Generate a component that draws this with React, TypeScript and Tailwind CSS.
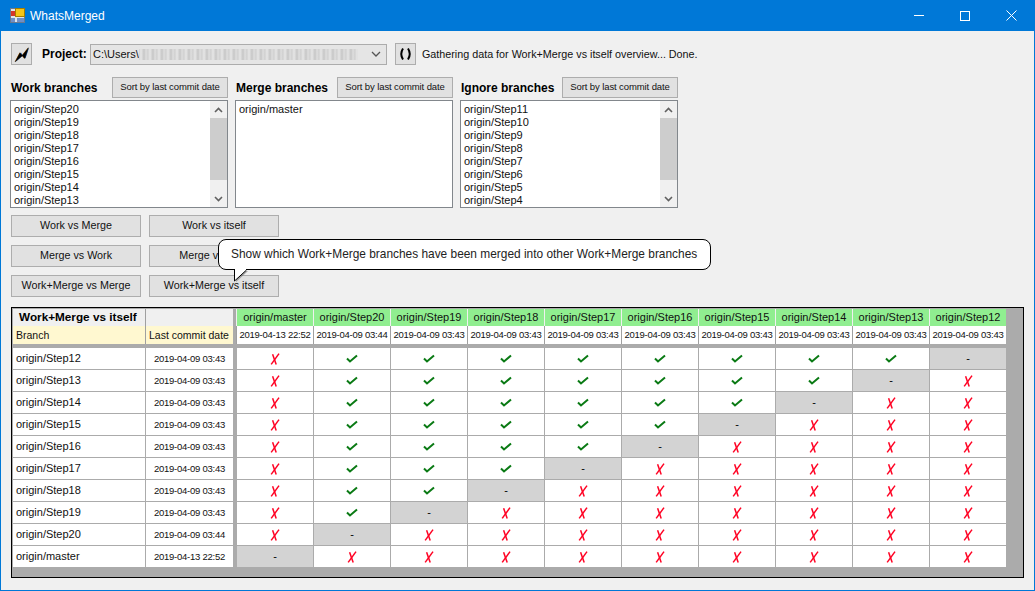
import React from "react";

const workItems = ["origin/Step20", "origin/Step19", "origin/Step18", "origin/Step17", "origin/Step16", "origin/Step15", "origin/Step14", "origin/Step13"];
const ignoreItems = ["origin/Step11", "origin/Step10", "origin/Step9", "origin/Step8", "origin/Step7", "origin/Step6", "origin/Step5", "origin/Step4"];

const columns = [
  { name: "origin/master", date: "2019-04-13 22:52" },
  { name: "origin/Step20", date: "2019-04-09 03:44" },
  { name: "origin/Step19", date: "2019-04-09 03:43" },
  { name: "origin/Step18", date: "2019-04-09 03:43" },
  { name: "origin/Step17", date: "2019-04-09 03:43" },
  { name: "origin/Step16", date: "2019-04-09 03:43" },
  { name: "origin/Step15", date: "2019-04-09 03:43" },
  { name: "origin/Step14", date: "2019-04-09 03:43" },
  { name: "origin/Step13", date: "2019-04-09 03:43" },
  { name: "origin/Step12", date: "2019-04-09 03:43" },
];

// rows run the other way round, the dash walks back along the diagonal
const rows = [...columns].reverse();

function WinButton({ children, className }: { children: React.ReactNode; className: string }) {
  return (
    <button className={`bg-[#e1e1e1] border border-[#adadad] text-[10.75px] text-[#111] flex items-center justify-center whitespace-nowrap ${className}`}>
      {children}
    </button>
  );
}

function ScrollBar() {
  return (
    <div className="w-[17px] h-full bg-[#f0f0f0] flex flex-col items-center shrink-0">
      <div className="h-[17px] flex items-center justify-center">
        <svg width="9" height="6" viewBox="0 0 9 6"><path d="M1 5 L4.5 1.5 L8 5" fill="none" stroke="#606060" strokeWidth="1.6" /></svg>
      </div>
      <div className="w-full h-[62px] bg-[#cdcdcd]" />
      <div className="flex-1" />
      <div className="h-[17px] flex items-center justify-center">
        <svg width="9" height="6" viewBox="0 0 9 6"><path d="M1 1 L4.5 4.5 L8 1" fill="none" stroke="#606060" strokeWidth="1.6" /></svg>
      </div>
    </div>
  );
}

function ListBox({ items, scroll }: { items: string[]; scroll?: boolean }) {
  return (
    <div className="w-[218px] h-[108px] border border-[#82878c] bg-white flex overflow-hidden">
      <div className="flex-1 pl-[3px] pt-[2px] text-[11px] leading-[13px] text-[#111] overflow-hidden">
        {items.map((s) => (
          <div key={s} className="h-[13px]">{s}</div>
        ))}
      </div>
      {scroll && <ScrollBar />}
    </div>
  );
}

function BranchHeader({ title }: { title: string }) {
  return (
    <div className="w-[218px] h-[21px] flex items-center justify-between">
      <span className="text-[12px] font-bold text-black pl-px">{title}</span>
      <WinButton className="w-[116px] h-[21px] !text-[9.5px] tracking-[-0.1px]">Sort by last commit date</WinButton>
    </div>
  );
}

function Cell({ row, col }: { row: number; col: number }) {
  const dash = columns.length - 1 - row;
  if (col === dash) {
    return <div className="bg-[#d3d3d3] h-full flex items-center justify-center text-[11px] text-black">-</div>;
  }
  const ok = col >= 1 && col < dash;
  return (
    <div className="bg-white h-full flex items-center justify-center">
      {ok ? (
        <svg width="12" height="9" viewBox="0 0 12 9">
          <path d="M1 4.5 L4 7.5 L11 1.5" fill="none" stroke="#0a7a14" strokeWidth="2" />
        </svg>
      ) : (
        <svg width="10" height="12" viewBox="0 0 10 12">
          <path d="M2.6 1.2 L6.2 11.5" fill="none" stroke="#ff0022" strokeWidth="1.5" />
          <path d="M9 0.6 L1.2 11.4" fill="none" stroke="#ff0022" strokeWidth="1.5" />
        </svg>
      )}
    </div>
  );
}

function MergeGrid() {
  return (
    <div className="ml-[11px] w-[1013px] h-[271px] border border-black p-px bg-[#ababab] overflow-hidden">
      <div className="flex h-[35px] w-[993px]">
        <div className="w-[220px] shrink-0 flex flex-col bg-[#f0f0f0]">
          <div className="flex h-[17px]">
            <div className="w-[133px] text-[11.75px] font-bold text-black pl-[6px] leading-[16px] border-r border-[#a0a0a0] whitespace-nowrap">Work+Merge vs itself</div>
            <div className="flex-1" />
          </div>
          <div className="flex h-[18px] bg-[#fff8d0] text-[10.5px] text-[#111]">
            <div className="w-[133px] pl-[3px] leading-[18px] border-r border-[#a0a0a0]">Branch</div>
            <div className="flex-1 pl-[3px] leading-[18px] whitespace-nowrap">Last commit date</div>
          </div>
        </div>
        <div className="w-[3px] shrink-0" />
        <div className="grid grid-cols-[repeat(10,77px)] grid-rows-[17px_18px]">
          {columns.map((c) => (
            <div key={c.name} className="bg-[#90ee90] border-l border-[#f0f0f0] text-[11px] text-[#111] text-center leading-[16px] whitespace-nowrap">{c.name}</div>
          ))}
          {columns.map((c) => (
            <div key={c.name + "d"} className="bg-white border-l border-[#a0a0a0] text-[9.5px] tracking-[-0.25px] text-[#111] text-center leading-[18px] whitespace-nowrap">{c.date}</div>
          ))}
        </div>
      </div>
      <div className="h-[4px]" />
      <div className="w-[993px] flex flex-col gap-px">
        {rows.map((r, i) => (
          <div key={r.name} className="flex h-[21px]">
            <div className="w-[132px] bg-white text-[11px] text-[#111] pl-[3px] leading-[21px] mr-px shrink-0">{r.name}</div>
            <div className="w-[87px] bg-white text-[9.5px] tracking-[-0.25px] text-[#111] text-center leading-[21px] shrink-0">{r.date}</div>
            <div className="w-[4px] shrink-0" />
            <div className="grid grid-cols-[repeat(10,76px)] gap-x-px">
              {columns.map((c, j) => (
                <Cell key={c.name} row={i} col={j} />
              ))}
            </div>
          </div>
        ))}
      </div>
    </div>
  );
}

export default function App() {
  return (
    <div className="relative w-[1035px] h-[591px] bg-[#f0f0f0] border border-[#0078d7] border-t-0 font-['Liberation_Sans',sans-serif] overflow-hidden">
      <div className="h-[31px] bg-[#0078d7] flex items-center text-white -mx-px">
        <svg width="15" height="15" viewBox="0 0 15 15" className="ml-[10px]">
          <rect x="0.5" y="0.5" width="14" height="14" fill="#dfe6ee" stroke="#6a7a90" />
          <rect x="5.5" y="0.5" width="9" height="8" fill="#f5c518" stroke="#a67c00" />
          <rect x="1" y="3" width="4" height="5" fill="#d8352a" />
          <rect x="1" y="10" width="4" height="4" fill="#6f8fc8" />
          <rect x="7" y="10" width="7" height="4" fill="#6f8fc8" />
        </svg>
        <span className="ml-[5px] text-[12px]">WhatsMerged</span>
        <div className="ml-auto flex h-full items-center">
          <div className="w-[46px] flex justify-center"><div className="w-[10px] h-px bg-white" /></div>
          <div className="w-[46px] flex justify-center"><div className="w-[10px] h-[10px] border border-white" /></div>
          <div className="w-[46px] flex justify-center mr-px">
            <svg width="11" height="11" viewBox="0 0 11 11"><path d="M0.5 0.5 L10.5 10.5 M10.5 0.5 L0.5 10.5" stroke="#fff" strokeWidth="1" /></svg>
          </div>
        </div>
      </div>

      <div className="flex items-center h-[22px] mt-[12px] pl-[10px]">
        <WinButton className="w-[21px] h-[22px]">
          <svg width="17" height="17" viewBox="0 0 17 17">
            <path d="M1.5 16 L6.5 6.5 L8.5 9.5 L15 1.5 L11 12.5 L8.5 9.5 Z" fill="#e08a20" />
            <path d="M3 15.5 L8 6.5 L10 9.5 L16 2 L12.5 12.5 L10 9.5 Z" fill="#2a6fc0" />
            <path d="M2.2 15.8 L7 6.8 L9.2 9.6 L15.4 1.8 L11.8 12.4 L9.2 9.8 Z" fill="#000" stroke="#000" strokeWidth="0.5" />
          </svg>
        </WinButton>
        <span className="ml-[10px] text-[12px] font-bold text-black w-[48px]">Project:</span>
        <div className="w-[297px] h-[21px] border border-[#acacac] bg-[#e5e5e5] flex items-center text-[11px] text-[#111] pl-[2px]">
          <span>C:\Users\</span>
          <div className="flex-1 h-[11px] mr-[13px] bg-[repeating-linear-gradient(90deg,#d2d2d2_0px,#e6e6e6_2px,#c6c6c6_5px,#dedede_7px,#cfcfcf_9px)]" />
          <svg width="10" height="6" viewBox="0 0 10 6" className="mr-[5px]"><path d="M1 1 L5 5 L9 1" fill="none" stroke="#555" strokeWidth="1.3" /></svg>
        </div>
        <WinButton className="w-[21px] h-[22px] ml-[8px]">
          <svg width="15" height="14" viewBox="0 0 15 14">
            <path d="M5 1.5 Q1.5 7 5 12.5" fill="none" stroke="#000" strokeWidth="2" />
            <path d="M10 1.5 Q13.5 7 10 12.5" fill="none" stroke="#000" strokeWidth="2" />
          </svg>
        </WinButton>
        <span className="ml-[6px] text-[10.75px] text-[#111]">Gathering data for Work+Merge vs itself overview... Done.</span>
      </div>

      <div className="flex gap-[7px] mt-[12px] pl-[9px]">
        <BranchHeader title="Work branches" />
        <BranchHeader title="Merge branches" />
        <BranchHeader title="Ignore branches" />
      </div>

      <div className="flex gap-[7px] mt-[2px] pl-[9px]">
        <ListBox items={workItems} scroll />
        <ListBox items={["origin/master"]} />
        <ListBox items={ignoreItems} scroll />
      </div>

      <div className="grid grid-cols-[130px_130px] grid-rows-[22px_22px_22px] gap-x-[8px] gap-y-[8px] w-fit mt-[7px] ml-[10px]">
        <WinButton className="pb-px">Work vs Merge</WinButton>
        <WinButton className="pb-px">Work vs itself</WinButton>
        <WinButton className="pb-px">Merge vs Work</WinButton>
        <WinButton className="pb-px">Merge vs itself</WinButton>
        <WinButton className="pb-px">Work+Merge vs Merge</WinButton>
        <WinButton className="pb-px">Work+Merge vs itself</WinButton>
      </div>

      <div className="mt-[10px] -ml-px">
        <MergeGrid />
      </div>

      {/* balloon tooltip over the buttons */}
      <div className="absolute left-[217px] top-[239px] w-[493px] h-[31px] bg-white border border-black rounded-[8px] text-[11.9px] text-[#222] leading-[29px] pl-[12px] whitespace-nowrap">
        Show which Work+Merge branches have been merged into other Work+Merge branches
      </div>
      <svg className="absolute left-[225px] top-[268px]" width="24" height="16" viewBox="0 0 24 16">
        <path d="M11 3 L22 3 L10 14 Z" fill="#555" opacity="0.5" />
        <path d="M8.5 2 L8.5 13 L20.5 2" fill="#fff" stroke="#000" strokeWidth="1" />
        <rect x="9" y="0" width="11" height="2" fill="#fff" />
      </svg>
    </div>
  );
}
